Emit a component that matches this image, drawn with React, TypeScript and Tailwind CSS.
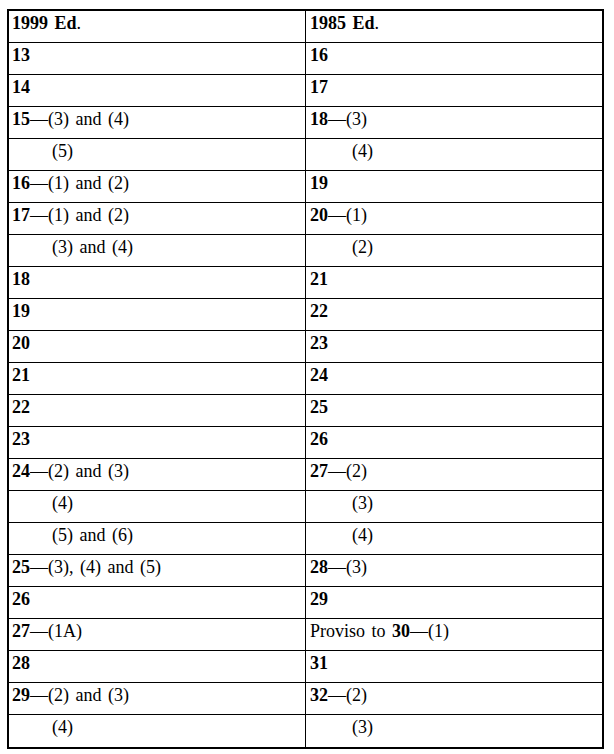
import React from "react";

type Cell = { pre?: string; b?: string; rest?: string; indent?: boolean };

const rows: [Cell, Cell][] = [
  [{ b: "1999 Ed", rest: "." }, { b: "1985 Ed", rest: "." }],
  [{ b: "13" }, { b: "16" }],
  [{ b: "14" }, { b: "17" }],
  [{ b: "15", rest: "—(3) and (4)" }, { b: "18", rest: "—(3)" }],
  [{ rest: "(5)", indent: true }, { rest: "(4)", indent: true }],
  [{ b: "16", rest: "—(1) and (2)" }, { b: "19" }],
  [{ b: "17", rest: "—(1) and (2)" }, { b: "20", rest: "—(1)" }],
  [{ rest: "(3) and (4)", indent: true }, { rest: "(2)", indent: true }],
  [{ b: "18" }, { b: "21" }],
  [{ b: "19" }, { b: "22" }],
  [{ b: "20" }, { b: "23" }],
  [{ b: "21" }, { b: "24" }],
  [{ b: "22" }, { b: "25" }],
  [{ b: "23" }, { b: "26" }],
  [{ b: "24", rest: "—(2) and (3)" }, { b: "27", rest: "—(2)" }],
  [{ rest: "(4)", indent: true }, { rest: "(3)", indent: true }],
  [{ rest: "(5) and (6)", indent: true }, { rest: "(4)", indent: true }],
  [{ b: "25", rest: "—(3), (4) and (5)" }, { b: "28", rest: "—(3)" }],
  [{ b: "26" }, { b: "29" }],
  [{ b: "27", rest: "—(1A)" }, { pre: "Proviso to ", b: "30", rest: "—(1)" }],
  [{ b: "28" }, { b: "31" }],
  [{ b: "29", rest: "—(2) and (3)" }, { b: "32", rest: "—(2)" }],
  [{ rest: "(4)", indent: true }, { rest: "(3)", indent: true }],
];

function CellText({ c }: { c: Cell }) {
  return (
    <span className="whitespace-pre">
      {c.pre}
      {c.b && <b className="font-bold">{c.b}</b>}
      {c.rest}
    </span>
  );
}

export default function App() {
  return (
    <div className="min-h-[754px] w-[614px] bg-white pt-[9px] pl-[7px] text-black font-['Liberation_Serif','Times_New_Roman',serif]">
      <div className="flex w-[597px] flex-col border-2 border-black text-[18px] leading-[20px] [word-spacing:2px]">
        {rows.map((r, i) => (
          <div
            key={i}
            className={
              i === rows.length - 1
                ? "flex h-[32px]"
                : "flex h-[32px] border-b border-black"
            }
          >
            <div
              className={
                r[0].indent
                  ? "w-[297px] border-r border-black pt-[2px] pl-[43px]"
                  : "w-[297px] border-r border-black pt-[2px] pl-[3px]"
              }
            >
              <CellText c={r[0]} />
            </div>
            <div
              className={
                r[1].indent
                  ? "flex-1 pt-[2px] pl-[46px]"
                  : "flex-1 pt-[2px] pl-[4px]"
              }
            >
              <CellText c={r[1]} />
            </div>
          </div>
        ))}
      </div>
    </div>
  );
}
